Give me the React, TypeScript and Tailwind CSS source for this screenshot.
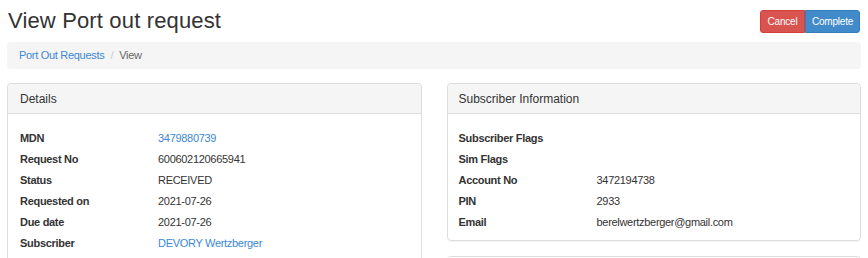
import React from "react";

const font = { fontFamily: '"Liberation Sans", Arial, Helvetica, sans-serif' };

function Row({ label, value, link, labelW }: { label: string; value?: string; link?: boolean; labelW: string }) {
  return (
    <div className="flex h-[21px] items-center text-[11px] tracking-[-0.3px]">
      <div className={`${labelW} shrink-0 font-bold text-[#333]`}>{label}</div>
      <div className={link ? "text-[#3c88d4]" : "text-[#333]"}>{value}</div>
    </div>
  );
}

export default function App() {
  return (
    <div className="w-[868px] h-[258px] overflow-hidden bg-white" style={font}>
      <div className="px-[7px]">
        <div className="flex items-start justify-between">
          <h1 className="text-[22px] leading-[28px] tracking-[0.15px] text-[#333] pt-[7px] pl-px">View Port out request</h1>
          <div className="flex mt-[10px] mr-px">
            <button className="h-[23px] w-[45px] text-[10px] tracking-[-0.2px] text-white bg-[#d9534f] border border-[#d43f3a] rounded-l-[3px]">Cancel</button>
            <button className="h-[23px] w-[55px] text-[10px] tracking-[-0.2px] text-white bg-[#428bca] border border-[#357ebd] rounded-r-[3px]">Complete</button>
          </div>
        </div>
        <div className="mt-[7px] h-[27px] rounded-[4px] bg-[#f5f5f5] flex items-center pl-[12px] text-[11px] tracking-[-0.3px]">
          <span className="text-[#3c88d4]">Port Out Requests</span>
          <span className="text-[#ccc] px-[6px]">/</span>
          <span className="text-[#666]">View</span>
        </div>
        <div className="grid grid-cols-2 gap-[25px] mt-[14px]">
          <div className="border border-[#ddd] rounded-[4px] shadow-[0_1px_1px_rgba(0,0,0,0.05)] h-[200px]">
            <div className="h-[30px] bg-[#f5f5f5] border-b border-[#ddd] rounded-t-[4px] flex items-center px-[12px] text-[12px] text-[#333]">Details</div>
            <div className="pt-[14px] pl-[12px]">
              <Row labelW="w-[138px]" label="MDN" value="3479880739" link />
              <Row labelW="w-[138px]" label="Request No" value="600602120665941" />
              <Row labelW="w-[138px]" label="Status" value="RECEIVED" />
              <Row labelW="w-[138px]" label="Requested on" value="2021-07-26" />
              <Row labelW="w-[138px]" label="Due date" value="2021-07-26" />
              <Row labelW="w-[138px]" label="Subscriber" value="DEVORY Wertzberger" link />
            </div>
          </div>
          <div>
            <div className="border border-[#ddd] rounded-[4px] shadow-[0_1px_1px_rgba(0,0,0,0.05)]">
              <div className="h-[30px] bg-[#f5f5f5] border-b border-[#ddd] rounded-t-[4px] flex items-center px-[11px] text-[12px] text-[#333]">Subscriber Information</div>
              <div className="pt-[14px] pb-[7px] pl-[11px]">
                <Row labelW="w-[138px]" label="Subscriber Flags" />
                <Row labelW="w-[138px]" label="Sim Flags" />
                <Row labelW="w-[138px]" label="Account No" value="3472194738" />
                <Row labelW="w-[138px]" label="PIN" value="2933" />
                <Row labelW="w-[138px]" label="Email" value="berelwertzberger@gmail.com" />
              </div>
            </div>
            <div className="mt-[15px] border border-[#ddd] rounded-[4px] h-[40px]"></div>
          </div>
        </div>
      </div>
    </div>
  );
}
